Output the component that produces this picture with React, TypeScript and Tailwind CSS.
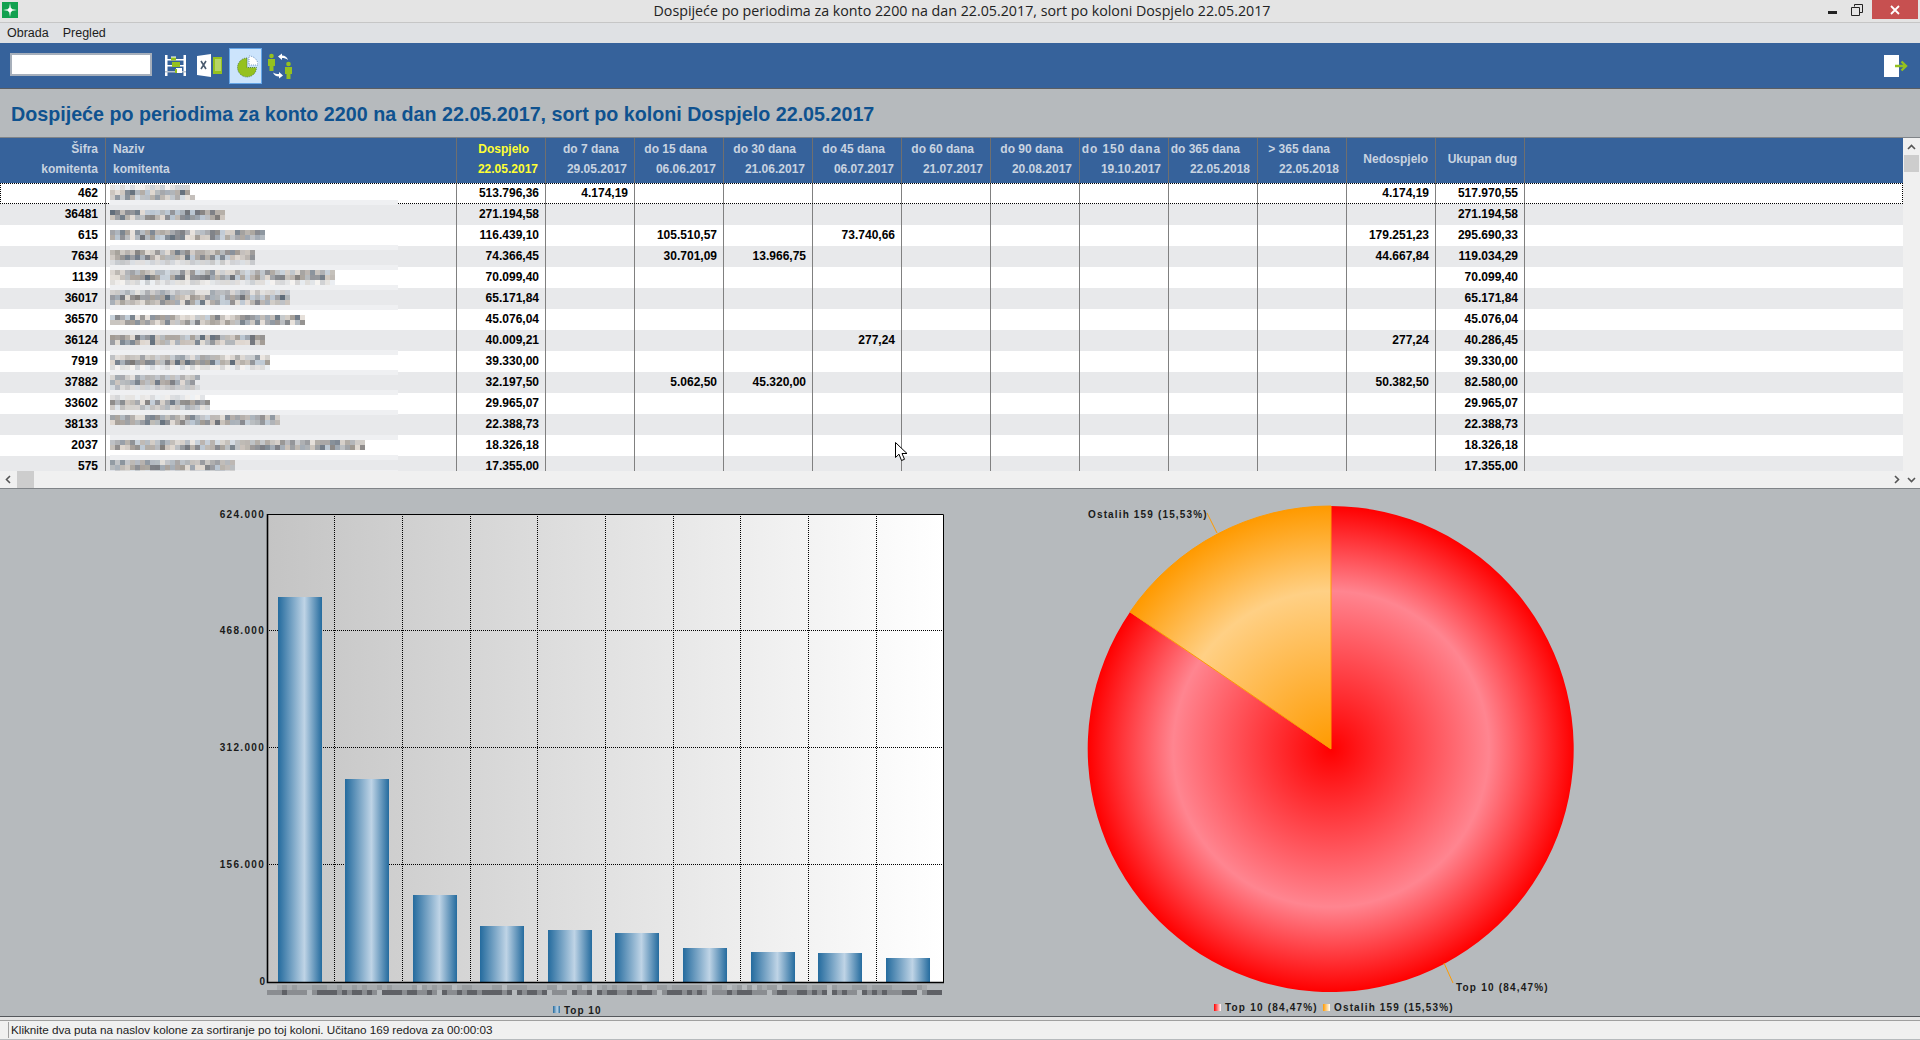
import { useMemo } from 'react';

type Row = {
  code: string;
  due: string;
  cells: Record<number, string>;
  notDue?: string;
  total: string;
};

const rows: Row[] = [
  { code: '462', due: '513.796,36', cells: { 0: '4.174,19' }, notDue: '4.174,19', total: '517.970,55' },
  { code: '36481', due: '271.194,58', cells: {}, total: '271.194,58' },
  { code: '615', due: '116.439,10', cells: { 1: '105.510,57', 3: '73.740,66' }, notDue: '179.251,23', total: '295.690,33' },
  { code: '7634', due: '74.366,45', cells: { 1: '30.701,09', 2: '13.966,75' }, notDue: '44.667,84', total: '119.034,29' },
  { code: '1139', due: '70.099,40', cells: {}, total: '70.099,40' },
  { code: '36017', due: '65.171,84', cells: {}, total: '65.171,84' },
  { code: '36570', due: '45.076,04', cells: {}, total: '45.076,04' },
  { code: '36124', due: '40.009,21', cells: { 3: '277,24' }, notDue: '277,24', total: '40.286,45' },
  { code: '7919', due: '39.330,00', cells: {}, total: '39.330,00' },
  { code: '37882', due: '32.197,50', cells: { 1: '5.062,50', 2: '45.320,00' }, notDue: '50.382,50', total: '82.580,00' },
  { code: '33602', due: '29.965,07', cells: {}, total: '29.965,07' },
  { code: '38133', due: '22.388,73', cells: {}, total: '22.388,73' },
  { code: '2037', due: '18.326,18', cells: {}, total: '18.326,18' },
  { code: '575', due: '17.355,00', cells: {}, total: '17.355,00' },
];

const periods = [
  { label: 'do 7 dana', date: '29.05.2017', pad: 'pr-[15px]' },
  { label: 'do 15 dana', date: '06.06.2017', pad: 'pr-[16px]' },
  { label: 'do 30 dana', date: '21.06.2017', pad: 'pr-[16px]' },
  { label: 'do 45 dana', date: '06.07.2017', pad: 'pr-[16px]' },
  { label: 'do 60 dana', date: '21.07.2017', pad: 'pr-[16px]' },
  { label: 'do 90 dana', date: '20.08.2017', pad: 'pr-[16px]' },
  { label: 'do 150 dana', date: '19.10.2017', pad: 'pr-[7px] tracking-[0.9px]' },
  { label: 'do 365 dana', date: '22.05.2018', pad: 'pr-[17px]' },
  { label: '> 365 dana', date: '22.05.2018', pad: 'pr-[16px]' },
];

// [y, right edge, opacity] of each line of the pixelated customer names
const nameLines: [number, number, number][] = [
  [185, 190, 0.35], [190, 190, 1], [195, 195, 0.8],
  [210, 225, 1], [215, 225, 1],
  [230, 265, 0.9], [235, 265, 1],
  [250, 255, 0.9], [255, 255, 1], [260, 255, 0.3],
  [270, 335, 0.8], [275, 335, 1], [280, 335, 0.35],
  [290, 290, 0.5], [295, 290, 1], [300, 290, 0.9],
  [315, 305, 0.9], [320, 305, 0.9],
  [335, 265, 1], [340, 265, 1],
  [355, 270, 0.7], [360, 270, 1], [365, 270, 0.3],
  [375, 200, 0.55], [380, 195, 1], [385, 200, 0.4],
  [395, 205, 0.3], [400, 210, 1], [405, 210, 0.6],
  [415, 280, 0.8], [420, 280, 1],
  [440, 365, 0.8], [445, 365, 1],
  [460, 235, 0.7], [465, 235, 1], [470, 235, 0.35],
];
const strips = [200, 245, 265, 285, 305, 350, 370, 390, 410, 435, 455, 470];

const blurColors = ['#b5afa8', '#8c8f94', '#6f7278', '#a7a099', '#c8c0b8', '#9aa3ad', '#7d7a78', '#b8c4d0', '#ded6ce', '#5f6b78', '#9b948c', '#aeb2b6'];

function seeded(seed: number) {
  let s = seed;
  return () => {
    s = (s * 16807) % 2147483647;
    return s / 2147483647;
  };
}

function NameMosaic() {
  const cells = useMemo(() => {
    const rnd = seeded(4711);
    const out: { x: number; y: number; fill: string; op: number }[] = [];
    for (const [y, end, op] of nameLines) {
      for (let x = 110; x < end; x += 5) {
        out.push({ x, y, fill: blurColors[Math.floor(rnd() * blurColors.length)], op: op * (0.75 + rnd() * 0.25) });
      }
    }
    return out;
  }, []);
  return (
    <svg className="absolute top-0 left-[110px] h-[300px] w-[290px]" viewBox="110 183 290 300">
      {strips.map((y) => (
        <rect key={y} x={110} y={y} width={288} height={5} fill="#eff0f2" />
      ))}
      {cells.map((c) => (
        <rect key={`${c.x}-${c.y}`} x={c.x} y={c.y} width={5} height={5} fill={c.fill} fillOpacity={c.op} />
      ))}
    </svg>
  );
}

function AppIcon() {
  return (
    <svg className="ml-[2px] h-4 w-4" viewBox="0 0 16 16">
      <rect width="16" height="16" fill="#12a150" />
      <path d="M8 1 L9 7 L15 8 L9 9 L8 15 L7 9 L1 8 L7 7 Z" fill="#fff" />
      <circle cx="8" cy="8" r="2.2" fill="#fff" />
    </svg>
  );
}

function AbacusIcon() {
  return (
    <svg className="h-[21px] w-[21px]" viewBox="0 0 21 21">
      <rect x="0" y="0" width="2.5" height="21" fill="#fff" />
      <rect x="18.5" y="0" width="2.5" height="21" fill="#fff" />
      <rect x="0" y="4" width="21" height="1.5" fill="#fff" />
      <rect x="0" y="10" width="21" height="1.5" fill="#fff" />
      <rect x="0" y="16" width="21" height="1.5" fill="#b8c2cc" />
      <rect x="6" y="1.5" width="5" height="3.5" fill="#fff" />
      <rect x="6" y="2.5" width="5" height="3" fill="#95c11f" />
      <rect x="7" y="7" width="8" height="5" fill="#95c11f" />
      <rect x="11" y="13" width="6" height="5" fill="#fff" />
      <rect x="10" y="14" width="2" height="4" fill="#95c11f" />
    </svg>
  );
}

function ExcelIcon() {
  return (
    <svg className="h-[23px] w-[25px]" viewBox="0 0 25 23">
      <path d="M0 2 L14 0 V23 L0 21 Z" fill="#fff" />
      <path d="M4 7 L9 15 M9 7 L4 15" stroke="#4a5a6e" strokeWidth="1.6" fill="none" />
      <rect x="16" y="3" width="9" height="17" fill="#95c11f" />
      <path d="M18 6 H24 M18 8 H24 M18 10 H24 M18 12 H24 M18 14 H24 M18 16 H24" stroke="#eaf3cf" strokeWidth="0.8" />
    </svg>
  );
}

function PieIcon() {
  return (
    <svg className="h-[24px] w-[24px]" viewBox="-2 0 24 24">
      <path d="M11 4 A9.5 9.5 0 1 0 20.5 13.5 H11 Z" fill="#95c11f" stroke="#2f5a2a" strokeWidth="0.7" strokeDasharray="1 1" />
      <path d="M13 2 A9 9 0 0 1 22 11 H13 Z" fill="#fff" stroke="#36629b" strokeWidth="0.6" strokeDasharray="1 1" />
    </svg>
  );
}

function UsersIcon() {
  return (
    <svg className="h-[26px] w-[24px]" viewBox="0 0 24 26">
      <circle cx="3.5" cy="3" r="2.3" fill="#95c11f" />
      <path d="M0 6 H7 V13 H5.5 V18 H1.5 V13 H0 Z" fill="#95c11f" />
      <circle cx="20.5" cy="11" r="2.3" fill="#95c11f" />
      <path d="M17 14 H24 V21 H22.5 V26 H18.5 V21 H17 Z" fill="#95c11f" />
      <path d="M10 3.5 L14 0.5 V2.5 C17 2.5 19 4 20 7 C18 5.5 16.5 5 14 5 V7 Z" fill="#fff" />
      <path d="M15 22.5 L11 25.5 V23.5 C8 23.5 6 22 5 19.5 C7 20.5 8.5 21 11 21 V19 Z" fill="#fff" />
    </svg>
  );
}

function ExitIcon() {
  return (
    <svg className="h-[22px] w-[24px]" viewBox="0 0 24 22">
      <rect x="0" y="0" width="15" height="22" fill="#fff" />
      <path d="M11 11 H22 M17.5 6.5 L22 11 L17.5 15.5" stroke="#95c11f" strokeWidth="2.4" fill="none" />
    </svg>
  );
}

function Cursor() {
  return (
    <svg className="absolute top-[442px] left-[895px] h-[20px] w-[13px]" viewBox="0 0 13 20">
      <path d="M0.5 0.5 V15.5 L4 12.2 L6.5 18.5 L9.5 17.3 L7 11.5 H12 Z" fill="#fff" stroke="#000" strokeWidth="1" />
    </svg>
  );
}

const bars = [
  { x: 278, top: 598 },
  { x: 345, top: 780 },
  { x: 413, top: 896 },
  { x: 480, top: 927 },
  { x: 548, top: 931 },
  { x: 615, top: 934 },
  { x: 683, top: 949 },
  { x: 751, top: 953 },
  { x: 818, top: 954 },
  { x: 886, top: 959 },
];
const xGrid = [334.5, 402.5, 470.5, 537.5, 605.5, 673.5, 740.5, 808.5, 876.5];
const yTicks = [
  { y: 515, label: '624.000' },
  { y: 631, label: '468.000' },
  { y: 748, label: '312.000' },
  { y: 865, label: '156.000' },
];

function BarChart() {
  const blur = useMemo(() => {
    const rnd = seeded(99);
    const out: { x: number; y: number; fill: string; op: number }[] = [];
    for (const y of [986, 991]) {
      for (let x = 267; x < 939; x += 5) {
        if (rnd() < 0.1) continue;
        out.push({ x, y, fill: rnd() > 0.5 ? '#55585c' : '#85888c', op: y === 986 ? 0.3 : 0.9 });
      }
    }
    return out;
  }, []);
  return (
    <svg className="h-[527px] w-[960px] shrink-0" viewBox="0 490 960 527">
      <defs>
        <linearGradient id="plotBg" x1="0" x2="1" y1="0" y2="0">
          <stop offset="0" stopColor="#c4c4c4" />
          <stop offset="1" stopColor="#ffffff" />
        </linearGradient>
        <linearGradient id="barFill" x1="0" x2="1" y1="0" y2="0">
          <stop offset="0" stopColor="#246b9e" />
          <stop offset="0.6" stopColor="#bfd4e6" />
          <stop offset="1" stopColor="#246b9e" />
        </linearGradient>
      </defs>
      <rect x={267} y={515} width={677} height={468} fill="url(#plotBg)" />
      {yTicks.slice(1).map((t) => (
        <line key={t.y} x1={267} x2={944} y1={t.y + 0.5} y2={t.y + 0.5} stroke="#000" strokeDasharray="1 1" />
      ))}
      {xGrid.map((x) => (
        <line key={x} x1={x} x2={x} y1={515} y2={983} stroke="#000" strokeDasharray="1 1" />
      ))}
      {bars.map((b) => (
        <rect key={b.x} x={b.x} y={b.top} width={44} height={983 - b.top} fill="url(#barFill)" />
      ))}
      <path d="M267.5 515.5 H943.5 V983" stroke="#000" fill="none" />
      <path d="M267.5 515 V983.5 H944" stroke="#000" strokeWidth="1.6" fill="none" />
      {yTicks.map((t) => (
        <text key={t.y} x={265} y={t.y + 4} textAnchor="end" className="fill-[#1a1a1a] text-[10px] font-bold tracking-[1.3px]">
          {t.label}
        </text>
      ))}
      <text x={265} y={986} textAnchor="end" className="fill-[#1a1a1a] text-[10px] font-bold">
        0
      </text>
      {blur.map((c) => (
        <rect key={`${c.x}-${c.y}`} x={c.x} y={c.y} width={5} height={5} fill={c.fill} fillOpacity={c.op} />
      ))}
      <rect x={553} y={1007} width={7} height={7} fill="url(#barFill)" />
      <text x={564} y={1015} className="fill-[#1a1a1a] text-[10px] font-bold tracking-[1px]">
        Top 10
      </text>
    </svg>
  );
}

function PieChart() {
  const cx = 1331;
  const cy = 750;
  const r = 243;
  const ex = 1130;
  const ey = 613;
  return (
    <svg className="h-[527px] w-[960px] shrink-0" viewBox="960 490 960 527">
      <defs>
        <radialGradient id="redFill" gradientUnits="userSpaceOnUse" cx={cx} cy={cy} r={r}>
          <stop offset="0" stopColor="#ff0000" />
          <stop offset="0.65" stopColor="#ff8590" />
          <stop offset="1" stopColor="#ff0000" />
        </radialGradient>
        <radialGradient id="orangeFill" gradientUnits="userSpaceOnUse" cx={cx} cy={cy} r={r}>
          <stop offset="0" stopColor="#ff9a00" />
          <stop offset="0.65" stopColor="#ffd085" />
          <stop offset="1" stopColor="#ff9a00" />
        </radialGradient>
        <linearGradient id="redSwatch" x1="0" x2="1" y1="0" y2="0">
          <stop offset="0" stopColor="#ff0000" />
          <stop offset="1" stopColor="#ffffff" />
        </linearGradient>
        <linearGradient id="orangeSwatch" x1="0" x2="1" y1="0" y2="0">
          <stop offset="0" stopColor="#ff9a00" />
          <stop offset="1" stopColor="#ffffff" />
        </linearGradient>
      </defs>
      <path d={`M${cx} ${cy} L${cx} ${cy - r} A${r} ${r} 0 1 1 ${ex} ${ey} Z`} fill="url(#redFill)" />
      <path d={`M${cx} ${cy} L${ex} ${ey} A${r} ${r} 0 0 1 ${cx} ${cy - r} Z`} fill="url(#orangeFill)" stroke="#ff9a00" strokeWidth="1" />
      <line x1={1207} y1={514} x2={1217} y2={534} stroke="#ff9a00" />
      <line x1={1444} y1={964} x2={1453} y2={984} stroke="#ff9a00" />
      <text x={1088} y={519} className="fill-[#1a1a1a] text-[10px] font-bold tracking-[1.15px]">
        Ostalih 159 (15,53%)
      </text>
      <text x={1456} y={992} className="fill-[#1a1a1a] text-[10px] font-bold tracking-[1.2px]">
        Top 10 (84,47%)
      </text>
      <rect x={1214} y={1005} width={7} height={7} fill="url(#redSwatch)" />
      <text x={1225} y={1012} className="fill-[#1a1a1a] text-[10px] font-bold tracking-[1.2px]">
        Top 10 (84,47%)
      </text>
      <rect x={1323} y={1005} width={7} height={7} fill="url(#orangeSwatch)" />
      <text x={1334} y={1012} className="fill-[#1a1a1a] text-[10px] font-bold tracking-[1.15px]">
        Ostalih 159 (15,53%)
      </text>
    </svg>
  );
}

function HeaderTwoLine({ top, bottom, className, topPad }: { top: string; bottom: string; className: string; topPad: string }) {
  return (
    <div className={`border-r border-[#6f6f6f] pt-px text-right ${className}`}>
      <div className={`h-5 leading-5 ${topPad}`}>{top}</div>
      <div className="h-5 pr-[7px] leading-5">{bottom}</div>
    </div>
  );
}

const gridCols = 'grid grid-cols-[106px_351px_repeat(12,89px)_1fr]';

export default function App() {
  return (
    <div className="relative flex h-[1040px] w-[1920px] flex-col overflow-hidden bg-[#b6babd] font-['Liberation_Sans',Arial,sans-serif] text-xs">
      {/* title bar */}
      <div className="flex h-[23px] shrink-0 items-start border-b border-[#c6c6c6] bg-[#e4e4e4]">
        <div className="pt-[2px]">
          <AppIcon />
        </div>
        <div className="flex-1 pt-px pl-[78px] text-center font-['Open_Sans',sans-serif] text-[14.25px] leading-[19px] text-[#222]">
          Dospijeće po periodima za konto 2200 na dan 22.05.2017, sort po koloni Dospjelo 22.05.2017
        </div>
        <div className="flex h-[19px] items-center">
          <div className="mr-[14px] mt-[5px] h-[3px] w-[9px] bg-[#222]" />
          <svg className="mr-[9px] h-3 w-3" viewBox="0 0 12 12">
            <path d="M3.5 2.5 V0.5 H11.5 V8.5 H9 M0.5 3.5 H8.5 V11.5 H0.5 Z" stroke="#222" fill="none" />
          </svg>
          <div className="flex h-[19px] w-[46px] items-center justify-center bg-[#c75050]">
            <svg className="h-[10px] w-[10px]" viewBox="0 0 10 10">
              <path d="M1 1 L9 9 M9 1 L1 9" stroke="#fff" strokeWidth="1.8" />
            </svg>
          </div>
          <div className="w-[2px]" />
        </div>
      </div>

      {/* menu */}
      <div className="flex h-[20px] shrink-0 items-center gap-[14px] bg-[#dfe1e4] pl-[7px] text-[12.5px] text-[#1c1c1c]">
        <span>Obrada</span>
        <span>Pregled</span>
      </div>

      {/* toolbar */}
      <div className="flex h-[46px] shrink-0 items-center border-b border-[#5a5d62] bg-[#36629b] pl-[10px]">
        <div className="mb-[2px] h-[23px] w-[142px] border-2 border-[#a6afbb] bg-white" />
        <div className="ml-[13px]">
          <AbacusIcon />
        </div>
        <div className="ml-[11px]">
          <ExcelIcon />
        </div>
        <div className="ml-[7px] flex h-[36px] w-[33px] items-center justify-center border border-[#66a7e8] bg-[#cce4fc]">
          <PieIcon />
        </div>
        <div className="ml-[6px]">
          <UsersIcon />
        </div>
        <div className="ml-auto mr-[12px]">
          <ExitIcon />
        </div>
      </div>

      {/* report title */}
      <div className="flex h-[48px] shrink-0 items-center pt-[3px] pl-[11px] text-[19.7px] font-bold text-[#0f528f]">
        Dospijeće po periodima za konto 2200 na dan 22.05.2017, sort po koloni Dospjelo 22.05.2017
      </div>

      {/* table */}
      <div className="flex h-[352px] shrink-0 border-t border-b border-[#808488] bg-[#f0f0f0]">
        <div className="flex w-[1903px] flex-col">
          <div className={`${gridCols} h-[45px] shrink-0 bg-[#36629b] font-bold text-[#c8d3e0]`}>
            <HeaderTwoLine top="Šifra" bottom="komitenta" className="" topPad="pr-[7px]" />
            <div className="border-r border-[#6f6f6f] pt-px pl-[7px]">
              <div className="h-5 leading-5">Naziv</div>
              <div className="h-5 leading-5">komitenta</div>
            </div>
            <HeaderTwoLine top="Dospjelo" bottom="22.05.2017" className="text-[#ffff33]" topPad="pr-[16px]" />
            {periods.map((p) => (
              <HeaderTwoLine key={p.label} top={p.label} bottom={p.date} className="" topPad={p.pad} />
            ))}
            <div className="flex items-center justify-end border-r border-[#6f6f6f] pr-[7px] pb-[3px]">Nedospjelo</div>
            <div className="flex items-center justify-end border-r border-[#6f6f6f] pr-[7px] pb-[3px]">Ukupan dug</div>
            <div />
          </div>
          <div className="relative min-h-0 flex-1 overflow-hidden">
            {rows.map((row, i) => (
              <div
                key={row.code}
                className={`${gridCols} h-[21px] font-bold leading-[20px] text-black ${i % 2 ? 'bg-[#e8e9eb]' : 'bg-white'} ${i === 0 ? 'outline outline-1 -outline-offset-1 outline-dotted outline-black' : ''}`}
              >
                <div className="border-r border-[#808080] pr-[7px] text-right">{row.code}</div>
                <div className="border-r border-[#808080]" />
                <div className="border-r border-[#808080] pr-[6px] text-right">{row.due}</div>
                {periods.map((_, p) => (
                  <div key={p} className="border-r border-[#808080] pr-[6px] text-right">
                    {row.cells[p]}
                  </div>
                ))}
                <div className="border-r border-[#808080] pr-[6px] text-right">{row.notDue}</div>
                <div className="border-r border-[#808080] pr-[6px] text-right">{row.total}</div>
                <div />
              </div>
            ))}
            <NameMosaic />
          </div>
          <div className="flex h-[17px] shrink-0 items-center bg-[#f0f0f0]">
            <svg className="ml-[5px] h-[9px] w-[6px]" viewBox="0 0 6 9">
              <path d="M5 1 L1.5 4.5 L5 8" stroke="#555" strokeWidth="1.6" fill="none" />
            </svg>
            <div className="ml-[6px] h-[17px] w-[17px] bg-[#cdcdcd]" />
            <svg className="ml-auto mr-[3px] h-[9px] w-[6px]" viewBox="0 0 6 9">
              <path d="M1 1 L4.5 4.5 L1 8" stroke="#555" strokeWidth="1.6" fill="none" />
            </svg>
          </div>
        </div>
        <div className="flex w-[17px] flex-col items-center bg-[#f0f0f0]">
          <svg className="mt-[6px] h-[6px] w-[9px]" viewBox="0 0 9 6">
            <path d="M1 5 L4.5 1.5 L8 5" stroke="#555" strokeWidth="1.6" fill="none" />
          </svg>
          <div className="mt-[5px] h-[17px] w-[15px] bg-[#cdcdcd]" />
          <svg className="mt-auto mb-[5px] h-[6px] w-[9px]" viewBox="0 0 9 6">
            <path d="M1 1 L4.5 4.5 L8 1" stroke="#555" strokeWidth="1.6" fill="none" />
          </svg>
        </div>
      </div>

      {/* charts */}
      <div className="flex h-[527px] shrink-0">
        <BarChart />
        <PieChart />
      </div>

      {/* status bar */}
      <div className="h-[4px] shrink-0 border-t border-[#55585c] bg-[#e4e4e4]" />
      <div className="flex h-[19px] shrink-0 items-center border-t border-[#a0a0a0] bg-[#f0f0f0] pl-[8px] text-[11.7px] text-[#1c1c1c]">
        <span className="border-l border-[#a0a0a0] pl-[2px] leading-[16px]">
          Kliknite dva puta na naslov kolone za sortiranje po toj koloni. Učitano 169 redova za 00:00:03
        </span>
      </div>

      <Cursor />
    </div>
  );
}
